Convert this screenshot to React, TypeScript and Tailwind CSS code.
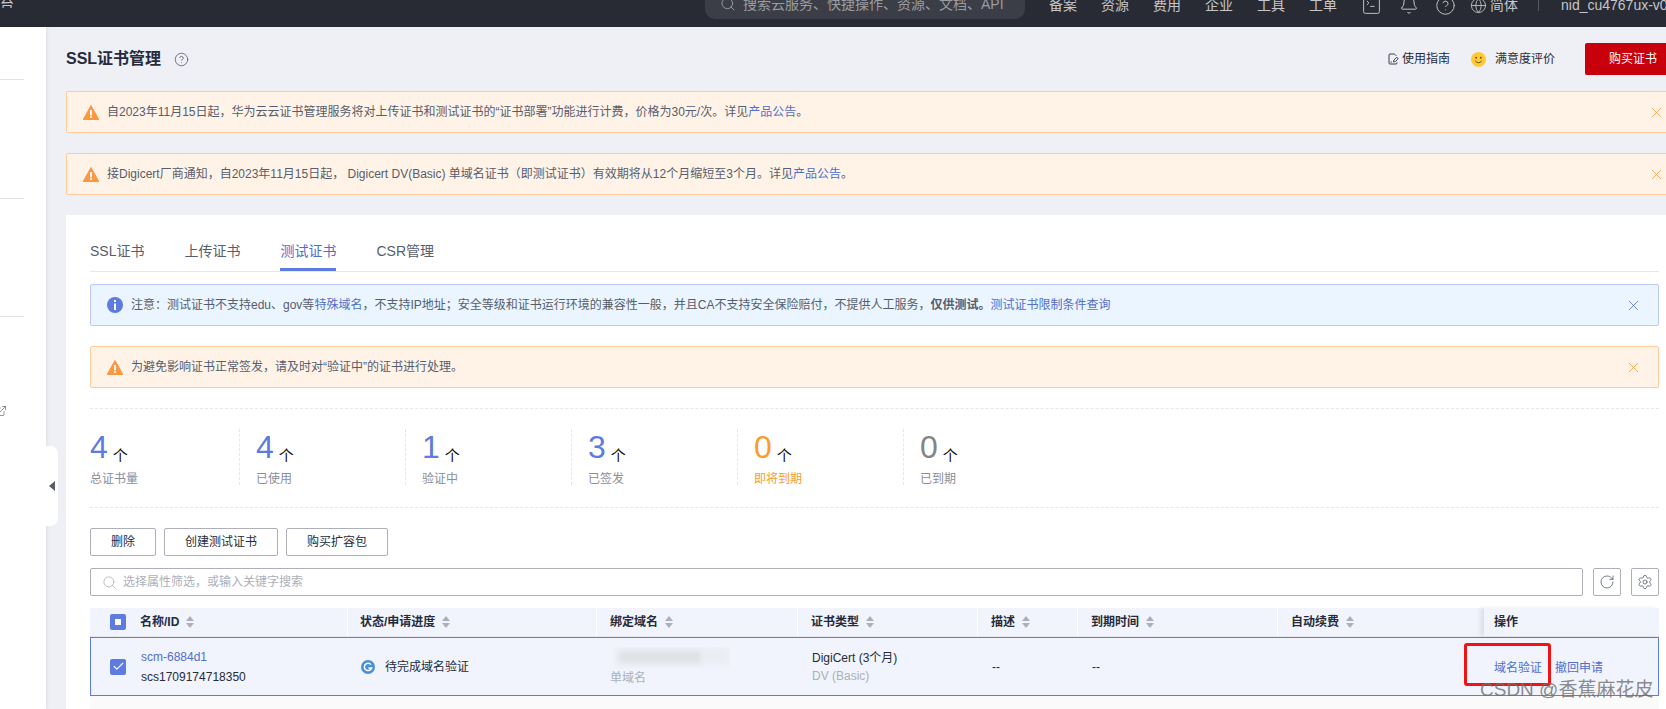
import React from "react";
import { Search, Bell, Globe, SquareTerminal, CircleHelp, X, ExternalLink, RotateCw, Settings, FilePenLine, Check } from "lucide-react";

function Warn({ className = "" }: { className?: string }) {
  return (
    <svg viewBox="0 0 16 15" className={"w-[16px] h-[15px] shrink-0 " + className}>
      <path d="M8 0.5 L15.8 14.5 H0.2 Z" fill="#fa9841" stroke="#fa9841" strokeLinejoin="round" />
      <rect x="7.1" y="5" width="1.8" height="5.4" fill="#fff" />
      <rect x="7.1" y="11.2" width="1.8" height="1.8" fill="#fff" />
    </svg>
  );
}

function Sort() {
  return (
    <svg viewBox="0 0 8 12" className="w-[8px] h-[12px] ml-[7px] shrink-0">
      <path d="M4 0 L8 5 H0 Z M4 12 L0 7 H8 Z" fill="#adb0b8" />
    </svg>
  );
}

function Th({ children, pad }: { children: React.ReactNode; pad: string }) {
  return (
    <div className={"flex items-center font-semibold text-[#252b3a] border-l border-white " + pad}>
      {children}
      <Sort />
    </div>
  );
}

function Stat({ n, label, color, labelColor, box }: { n: string; label: string; color: string; labelColor: string; box: string }) {
  return (
    <div className={"h-[56px] flex flex-col " + box}>
      <div className="flex items-end h-[36px]">
        <span className={"text-[32px] leading-[36px] " + color}>{n}</span>
        <span className="text-[15px] leading-[18px] ml-[5px] text-[#111]">个</span>
      </div>
      <div className={"text-[12px] leading-[16px] mt-[6px] " + labelColor}>{label}</div>
    </div>
  );
}

const statBox = "w-[166px] pl-[16px] border-l border-dashed border-[#e5e7ec]";

export default function App() {
  return (
    <div className="relative h-[709px] w-full overflow-hidden flex flex-col bg-[#eef0f5] text-[12px] text-[#575d6c] font-['Liberation_Sans','Noto_Sans_CJK_SC',sans-serif]">
      {/* top bar */}
      <header className="h-[27px] shrink-0 bg-[#282b33] overflow-hidden text-[#c4c6cc] text-[14px] flex items-start">
        <div className="w-[14px] h-[8px] flex items-center overflow-hidden shrink-0 text-[14px] whitespace-nowrap justify-end">台</div>
        <div className="ml-[691px] w-[320px] h-[19px] bg-[#3b3e46] rounded-b-[10px] flex items-start pl-[15px] shrink-0">
          <div className="h-[8px] flex items-center gap-[7px] text-[#9a9ca3] text-[14px] whitespace-nowrap">
            <Search size={16} strokeWidth={1.4} />
            <span>搜索云服务、快捷操作、资源、文档、API</span>
          </div>
        </div>
        <div className="ml-[24px] h-[8px] flex items-center gap-[24px] whitespace-nowrap shrink-0 mt-[1px]">
          <span>备案</span><span>资源</span><span>费用</span><span>企业</span><span>工具</span><span>工单</span>
          <SquareTerminal size={21} strokeWidth={1.1} />
          <Bell size={20} strokeWidth={1.2} className="-ml-[7px]" />
          <CircleHelp size={21} strokeWidth={1.1} className="-ml-[8px]" />
          <span className="flex items-center gap-[3px] -ml-[10px]"><Globe size={17} strokeWidth={1.2} />简体</span>
        </div>
        <div className="ml-[20px] w-px h-[11px] bg-[#53565e] shrink-0" />
        <div className="ml-[22px] h-[8px] flex items-center whitespace-nowrap shrink-0 mt-[1px]">nid_cu4767ux-v0</div>
      </header>

      <div className="flex-1 flex min-h-0">
        {/* left menu */}
        <aside className="w-[46px] shrink-0 bg-white flex flex-col shadow-[1px_0_3px_rgba(0,0,0,0.08)] overflow-hidden">
          <div className="h-px w-[24px] mt-[52px] bg-[#dfe1e6]" />
          <div className="h-px w-[24px] mt-[118px] bg-[#dfe1e6]" />
          <div className="h-px w-[24px] mt-[117px] bg-[#dfe1e6]" />
          <ExternalLink size={12} strokeWidth={1.3} className="mt-[88px] -ml-[5px] text-[#575d6c]" />
        </aside>

        <main className="flex-1 min-w-0 pl-[20px] overflow-hidden">
          {/* title */}
          <div className="mt-[16px] h-[32px] flex items-center">
            <h1 className="text-[16px] font-bold text-[#252b3a] leading-none">SSL证书管理</h1>
            <CircleHelp size={15} strokeWidth={1.3} className="ml-[13px] text-[#575d6c]" />
            <div className="ml-auto flex items-center text-[#252b3a]">
              <FilePenLine size={12} strokeWidth={1.8} className="mr-[3px]" />
              <span>使用指南</span>
              <svg viewBox="0 0 16 16" className="w-[15px] h-[15px] ml-[21px]">
                <circle cx="8" cy="8" r="8" fill="#ffc933" />
                <circle cx="5.5" cy="6" r="1" fill="#5b4a1a" />
                <circle cx="10.5" cy="6" r="1" fill="#5b4a1a" />
                <path d="M4.5 9.5 Q8 13.5 11.5 9.5" fill="none" stroke="#5b4a1a" strokeWidth="1" />
              </svg>
              <span className="ml-[9px]">满意度评价</span>
              <div className="ml-[30px] w-[81px] h-[32px] bg-[#c7000b] rounded-l-[2px] text-white flex items-center pl-[24px]">购买证书</div>
            </div>
          </div>

          {/* page notices */}
          <div className="mt-[16px] h-[42px] border border-[#ffcb9c] bg-[#fff3e8] rounded-[2px] flex items-center pl-[16px] -mr-[4px]">
            <Warn />
            <span className="ml-[8px] whitespace-nowrap">自2023年11月15日起，华为云云证书管理服务将对上传证书和测试证书的“证书部署”功能进行计费，价格为30元/次。详见<span className="text-[#526ecc]">产品公告</span>。</span>
            <X size={17} strokeWidth={1.1} className="ml-auto mr-[4px] text-[#fa9841]" />
          </div>
          <div className="mt-[20px] h-[42px] border border-[#ffcb9c] bg-[#fff3e8] rounded-[2px] flex items-center pl-[16px] -mr-[4px]">
            <Warn />
            <span className="ml-[8px] whitespace-nowrap">接Digicert厂商通知，自2023年11月15日起， Digicert DV(Basic) 单域名证书（即测试证书）有效期将从12个月缩短至3个月。详见<span className="text-[#526ecc]">产品公告</span>。</span>
            <X size={17} strokeWidth={1.1} className="ml-auto mr-[4px] text-[#fa9841]" />
          </div>

          {/* card */}
          <section className="mt-[20px] bg-white pl-[24px] pr-[7px] h-[500px]">
            <nav className="h-[57px] border-b border-[#e5e7ec] flex items-end gap-[40px] text-[14px]">
              <div className="h-[30px] leading-[20px]">SSL证书</div>
              <div className="h-[30px] leading-[20px]">上传证书</div>
              <div className="h-[30px] leading-[20px] text-[#526ecc] border-b-[3px] border-[#5e7ce0]">测试证书</div>
              <div className="h-[30px] leading-[20px]">CSR管理</div>
            </nav>

            <div className="mt-[12px] h-[42px] border border-[#bccbf5] bg-[#eaf5ff] rounded-[2px] flex items-center pl-[16px]">
              <svg viewBox="0 0 16 16" className="w-[16px] h-[16px] shrink-0">
                <circle cx="8" cy="8" r="8" fill="#5e7ce0" />
                <rect x="7" y="3" width="2" height="2" fill="#fff" />
                <rect x="7" y="6.5" width="2" height="6.5" fill="#fff" />
              </svg>
              <span className="ml-[8px] whitespace-nowrap">注意：测试证书不支持edu、gov等<span className="text-[#526ecc]">特殊域名</span>，不支持IP地址；安全等级和证书运行环境的兼容性一般，并且CA不支持安全保险赔付，不提供人工服务，<b className="font-bold">仅供测试。</b><span className="text-[#526ecc]">测试证书限制条件查询</span></span>
              <X size={17} strokeWidth={1.1} className="ml-auto mr-[16px] text-[#526ecc]" />
            </div>
            <div className="mt-[20px] h-[42px] border border-[#ffcb9c] bg-[#fff3e8] rounded-[2px] flex items-center pl-[16px]">
              <Warn />
              <span className="ml-[8px] whitespace-nowrap">为避免影响证书正常签发，请及时对“验证中”的证书进行处理。</span>
              <X size={17} strokeWidth={1.1} className="ml-auto mr-[16px] text-[#fa9841]" />
            </div>

            {/* stats */}
            <div className="mt-[20px] border-t border-b border-dashed border-[#e5e7ec] pt-[20px] pb-[22px] flex">
              <Stat box="w-[149px]" n="4" label="总证书量" color="text-[#5e7ce0]" labelColor="text-[#8a8e99]" />
              <Stat box={statBox} n="4" label="已使用" color="text-[#5e7ce0]" labelColor="text-[#8a8e99]" />
              <Stat box={statBox} n="1" label="验证中" color="text-[#5e7ce0]" labelColor="text-[#8a8e99]" />
              <Stat box={statBox} n="3" label="已签发" color="text-[#5e7ce0]" labelColor="text-[#8a8e99]" />
              <Stat box={statBox} n="0" label="即将到期" color="text-[#fa9c2c]" labelColor="text-[#fa9c2c]" />
              <Stat box={statBox} n="0" label="已到期" color="text-[#858585]" labelColor="text-[#8a8e99]" />
            </div>

            {/* buttons */}
            <div className="mt-[20px] flex gap-[8px] text-[#252b3a]">
              <button className="w-[66px] h-[28px] border border-[#adb0b8] rounded-[2px]">删除</button>
              <button className="w-[114px] h-[28px] border border-[#adb0b8] rounded-[2px]">创建测试证书</button>
              <button className="w-[102px] h-[28px] border border-[#adb0b8] rounded-[2px]">购买扩容包</button>
            </div>

            {/* search */}
            <div className="mt-[12px] flex gap-[10px]">
              <div className="flex-1 h-[28px] border border-[#adb0b8] rounded-[2px] flex items-center pl-[11px] text-[#adb0b8]">
                <Search size={15} strokeWidth={1.3} />
                <span className="ml-[6px]">选择属性筛选，或输入关键字搜索</span>
              </div>
              <div className="w-[28px] h-[28px] border border-[#adb0b8] rounded-[2px] flex items-center justify-center text-[#575d6c]"><RotateCw size={16} strokeWidth={1.2} /></div>
              <div className="w-[28px] h-[28px] border border-[#adb0b8] rounded-[2px] flex items-center justify-center text-[#575d6c]"><Settings size={16} strokeWidth={1.2} /></div>
            </div>

            {/* table */}
            <div className="mt-[12px]">
              <div className="h-[29px] bg-[#f1f4fc] border-b border-[#e5e7ec] grid grid-cols-[257px_249px_201px_180px_100px_200px_207px_175px]">
                <div className="flex items-center pl-[20px] font-semibold text-[#252b3a]">
                  <span className="w-[16px] h-[16px] rounded-[2px] bg-[#5e7ce0] flex items-center justify-center"><span className="w-[6px] h-[6px] bg-white" /></span>
                  <span className="ml-[14px]">名称/ID</span>
                  <Sort />
                </div>
                <Th pad="pl-[12px]">状态/申请进度</Th>
                <Th pad="pl-[13px]">绑定域名</Th>
                <Th pad="pl-[13px]">证书类型</Th>
                <Th pad="pl-[13px]">描述</Th>
                <Th pad="pl-[13px]">到期时间</Th>
                <Th pad="pl-[13px]">自动续费</Th>
                <div className="flex items-center pl-[10px] font-semibold text-[#252b3a] shadow-[-4px_0_4px_rgba(0,0,0,0.08)]">操作</div>
              </div>
              <div className="h-[59px] bg-[#f1f4fc] border border-[#5e7ce0] grid grid-cols-[256px_249px_201px_180px_100px_200px_207px_174px] text-[#252b3a]">
                <div className="flex items-center pl-[19px]">
                  <span className="w-[16px] h-[16px] rounded-[2px] bg-[#5e7ce0] flex items-center justify-center"><Check size={13} strokeWidth={2} className="text-white" /></span>
                  <div className="ml-[15px] leading-[20px] pt-[1px]">
                    <div className="text-[#526ecc]">scm-6884d1</div>
                    <div>scs1709174718350</div>
                  </div>
                </div>
                <div className="flex items-center pl-[14px]">
                  <svg viewBox="0 0 14 14" className="w-[14px] h-[14px] shrink-0">
                    <circle cx="7" cy="7" r="7" fill="#4a90d9" />
                    <path d="M10 4.6 A3.7 3.7 0 1 0 10.6 8 H7.4" fill="none" stroke="#fff" strokeWidth="1.5" />
                  </svg>
                  <span className="ml-[10px]">待完成域名验证</span>
                </div>
                <div className="flex flex-col justify-center pl-[14px]">
                  <div className="h-[22px] w-[120px] flex overflow-hidden">
                    <div className="w-[85px] h-[14px] mt-[3px] ml-[8px] bg-[#dfe1e6] blur-[3px]" />
                    <div className="w-[27px] h-[18px] bg-[#ebedf3] blur-[3px]" />
                  </div>
                  <div className="text-[#adb0b8] leading-[18px]">单域名</div>
                </div>
                <div className="flex flex-col justify-center pl-[15px] leading-[18px]">
                  <div>DigiCert (3个月)</div>
                  <div className="text-[#adb0b8]">DV (Basic)</div>
                </div>
                <div className="flex items-center pl-[15px]">--</div>
                <div className="flex items-center pl-[15px]">--</div>
                <div />
                <div className="flex items-center pl-[10px] pt-[2px] gap-[13px] text-[#526ecc]">
                  <span>域名验证</span><span>撤回申请</span>
                </div>
              </div>
              <div className="h-[20px] bg-[#fafafa]" />
            </div>
          </section>
        </main>
      </div>

      {/* collapse handle */}
      <div className="absolute left-[46px] top-[446px] w-[12px] h-[80px] bg-white rounded-r-[8px] flex items-center">
        <svg viewBox="0 0 6 10" className="w-[6px] h-[10px] ml-[3px]"><path d="M6 0 V10 L0 5 Z" fill="#575d6c" /></svg>
      </div>
      {/* screenshot annotation */}
      <div className="absolute left-[1464px] top-[643px] w-[87px] h-[43px] border-[3px] border-[#f01414] rounded-[3px]" />
      {/* watermark */}
      <div className="absolute left-[1480px] top-[679px] text-[19px] leading-[22px] whitespace-nowrap text-[#6e6e6e]/80">CSDN @香蕉麻花皮</div>
    </div>
  );
}
